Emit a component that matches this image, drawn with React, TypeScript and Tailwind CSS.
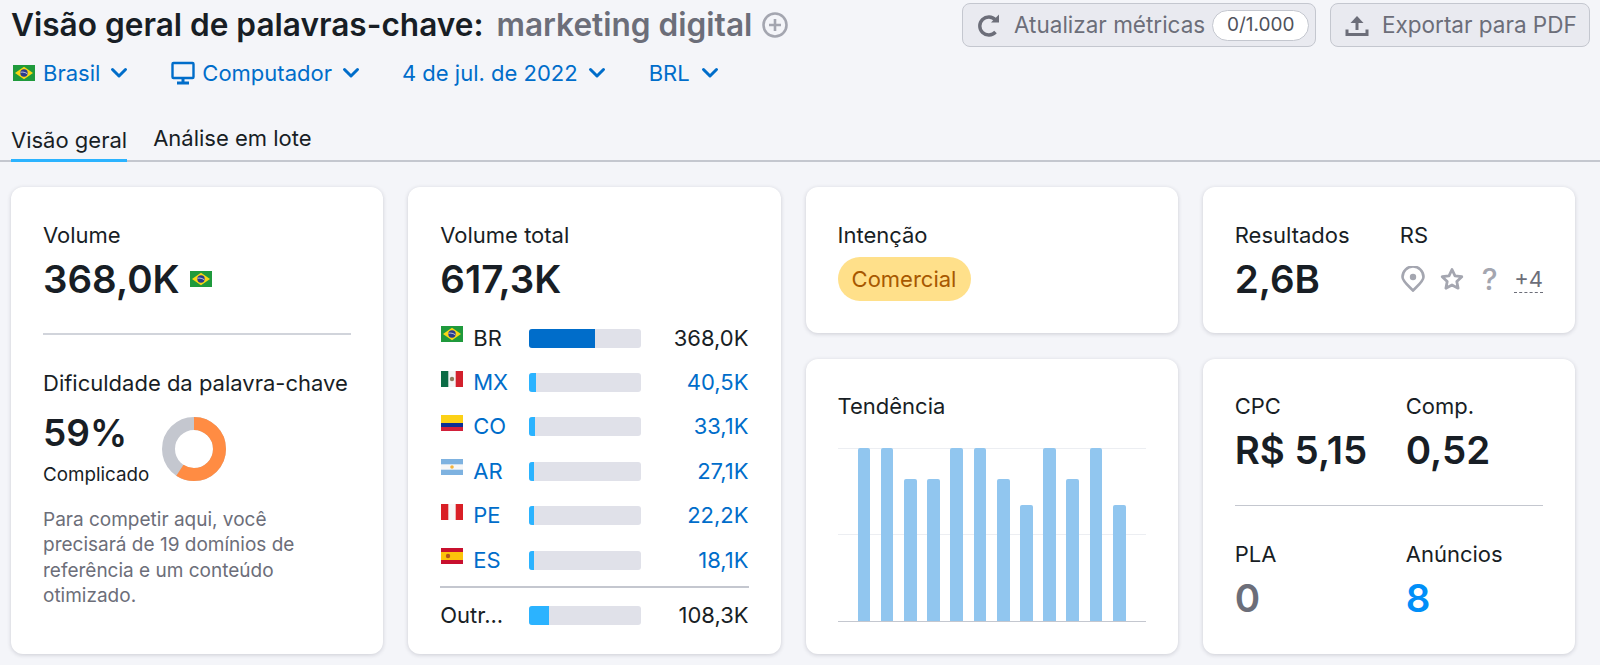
import type { ReactNode } from 'react';

const Chevron = () => (
  <svg width="18" height="12" viewBox="0 0 18 12" className="shrink-0" fill="none">
    <path d="M2.500 2.500 9 9l6.500-6.500" stroke="#006dca" strokeWidth="3" strokeLinecap="round" strokeLinejoin="round" />
  </svg>
);

const FlagBR = () => (
  <svg width="22" height="16" viewBox="0 0 22 16" className="shrink-0">
    <rect width="22" height="16" fill="#1f9a3c" />
    <path d="M11 1.800 20 8l-9 6.200L2 8z" fill="#f9d616" />
    <circle cx="11" cy="8" r="3.700" fill="#2b3a8c" />
    <path d="M7.600 7.200c2.400-.4 4.800.2 6.700 1.600" stroke="#fff" strokeWidth="0.7" fill="none" />
  </svg>
);

const FlagMX = () => (
  <svg width="22" height="16" viewBox="0 0 22 16" className="shrink-0">
    <rect width="22" height="16" fill="#f4f4f4" />
    <rect width="7.300" height="16" fill="#0b6b45" />
    <rect x="14.700" width="7.300" height="16" fill="#d2202c" />
    <circle cx="11" cy="8" r="2.200" fill="#8d7b5c" />
  </svg>
);

const FlagCO = () => (
  <svg width="22" height="16" viewBox="0 0 22 16" className="shrink-0">
    <rect width="22" height="8" fill="#fcd116" />
    <rect y="8" width="22" height="4" fill="#0b2f95" />
    <rect y="12" width="22" height="4" fill="#d2203a" />
  </svg>
);

const FlagAR = () => (
  <svg width="22" height="16" viewBox="0 0 22 16" className="shrink-0">
    <rect width="22" height="16" fill="#7eb2e0" />
    <rect y="5.300" width="22" height="5.400" fill="#f7f7f7" />
    <circle cx="11" cy="8" r="1.800" fill="#f4b43c" />
  </svg>
);

const FlagPE = () => (
  <svg width="22" height="16" viewBox="0 0 22 16" className="shrink-0">
    <rect width="22" height="16" fill="#f7f7f7" />
    <rect width="7.300" height="16" fill="#d91f26" />
    <rect x="14.700" width="7.300" height="16" fill="#d91f26" />
  </svg>
);

const FlagES = () => (
  <svg width="22" height="16" viewBox="0 0 22 16" className="shrink-0">
    <rect width="22" height="16" fill="#c8102e" />
    <rect y="4" width="22" height="8" fill="#fcc30b" />
    <circle cx="7" cy="8" r="2.200" fill="#b5541c" />
  </svg>
);

const Label = ({ children }: { children: ReactNode }) => (
  <div className="text-[22px] leading-[28px] text-[#181e25] whitespace-nowrap">{children}</div>
);

const Big = ({ children, color = 'text-[#181e25]' }: { children: ReactNode; color?: string }) => (
  <div className={`text-[38.5px] leading-[44px] font-semibold whitespace-nowrap ${color}`}>{children}</div>
);

const Card = ({ children, className = '' }: { children: ReactNode; className?: string }) => (
  <div className={`bg-white rounded-xl shadow-[0_1px_4px_rgba(25,30,50,0.18)] px-[32px] ${className}`}>{children}</div>
);

const countries = [
  { flag: <FlagBR />, code: 'BR', pct: 59, value: '368,0K', main: true },
  { flag: <FlagMX />, code: 'MX', pct: 6, value: '40,5K' },
  { flag: <FlagCO />, code: 'CO', pct: 5.5, value: '33,1K' },
  { flag: <FlagAR />, code: 'AR', pct: 4.5, value: '27,1K' },
  { flag: <FlagPE />, code: 'PE', pct: 4.5, value: '22,2K' },
  { flag: <FlagES />, code: 'ES', pct: 4.5, value: '18,1K' },
];

const trend = [173, 173, 142, 142, 173, 173, 142, 116, 173, 142, 173, 116];

export default function App() {
  return (
    <div className="w-[1600px] h-[665px] overflow-hidden bg-[#f4f5f9] text-[#181e25] [font-family:Inter,sans-serif]">
      <div className="flex justify-between pl-[11px] pr-[10px] pt-[3px]">
        <div>
          <div className="flex items-center h-[44px] text-[31.6px] font-semibold whitespace-nowrap">
            <span>Visão geral de palavras-chave:</span>
            <span className="ml-[13px] text-[#6c6e79]">marketing digital</span>
            <svg width="28" height="28" viewBox="0 0 28 28" className="ml-[9px]" fill="none">
              <circle cx="14" cy="14" r="11.500" stroke="#a4a6b0" strokeWidth="2.600" />
              <path d="M14 8v12M8 14h12" stroke="#a4a6b0" strokeWidth="2.600" />
            </svg>
          </div>
          <div className="flex items-center mt-[8px] ml-[2px] h-[36px] text-[22px] text-[#006dca] whitespace-nowrap">
            <FlagBR />
            <span className="ml-[8px]">Brasil</span>
            <span className="ml-[10px]"><Chevron /></span>
            <svg width="24" height="24" viewBox="0 0 24 24" className="ml-[43px]" fill="none">
              <rect x="1.500" y="2" width="21" height="15" rx="1" stroke="#006dca" strokeWidth="2.400" />
              <path d="M12 17v4M6 22h12" stroke="#006dca" strokeWidth="3" />
            </svg>
            <span className="ml-[7px]">Computador</span>
            <span className="ml-[10px]"><Chevron /></span>
            <span className="ml-[42px]">4 de jul. de 2022</span>
            <span className="ml-[10px]"><Chevron /></span>
            <span className="ml-[43px]">BRL</span>
            <span className="ml-[11px]"><Chevron /></span>
          </div>
        </div>
        <div className="flex gap-[14px] text-[22.5px] text-[#6c6e79] whitespace-nowrap">
          <div className="flex items-center w-[354px] h-[44px] rounded-lg border border-[#c4c7cf] bg-[#e9eaf0] pl-[14px]">
            <svg width="24" height="24" viewBox="0 0 24 24" fill="none">
              <path d="M18.500 7A9 9 0 1 0 18.500 19" stroke="#6c6e79" strokeWidth="3.400" />
              <path d="M14 9.500H22V1.500z" fill="#6c6e79" />
            </svg>
            <span className="ml-[13px]">Atualizar métricas</span>
            <span className="flex items-center justify-center ml-[7px] w-[97px] h-[31px] rounded-full border border-[#c4c7cf] bg-white text-[19px] text-[#50525c]">0/1.000</span>
          </div>
          <div className="flex items-center w-[260px] h-[44px] rounded-lg border border-[#c4c7cf] bg-[#e9eaf0] pl-[14px]">
            <svg width="24" height="24" viewBox="0 0 24 24" fill="none">
              <path d="M12 17V7" stroke="#6c6e79" strokeWidth="3" />
              <path d="M5.500 10 12 3l6.500 7z" fill="#6c6e79" />
              <path d="M2 16.500v5h20v-5" stroke="#6c6e79" strokeWidth="3" />
            </svg>
            <span className="ml-[13px]">Exportar para PDF</span>
          </div>
        </div>
      </div>

      <div className="flex items-end gap-[26px] mt-[29px] h-[42px] px-[11px] border-b-2 border-[#c4c7cf] text-[22px] whitespace-nowrap">
        <div className="h-[42px] leading-[40px] border-b-[3px] border-[#2bb3ff] mb-[-2px]">Visão geral</div>
        <div className="h-[42px] leading-[40px]">Análise em lote</div>
      </div>

      <div className="grid grid-cols-4 gap-x-[25px] gap-y-[26px] grid-rows-[146px_295px] mt-[25px] ml-[11px] mr-[25px]">
        <Card className="row-span-2 pt-[34px]">
          <Label>Volume</Label>
          <div className="flex items-center mt-[8px]">
            <Big>368,0K</Big>
            <span className="ml-[10px]"><FlagBR /></span>
          </div>
          <div className="h-[2px] bg-[#d1d4db] mt-[32px]" />
          <div className="mt-[34px]"><Label>Dificuldade da palavra-chave</Label></div>
          <div className="flex mt-[14px]">
            <div>
              <div className="text-[37px] leading-[44px] font-semibold whitespace-nowrap">59%</div>
              <div className="text-[18.8px] leading-[26px] mt-[7px]">Complicado</div>
            </div>
            <svg width="64" height="64" viewBox="0 0 64 64" className="ml-[13px] mt-[6px]">
              <circle cx="32" cy="32" r="25.500" fill="none" stroke="#c4c7cf" strokeWidth="13" />
              <circle cx="32" cy="32" r="25.500" fill="none" stroke="#ff8c43" strokeWidth="13" strokeDasharray="94.500 160.200" transform="rotate(-90 32 32)" />
            </svg>
          </div>
          <p className="mt-[19px] text-[19px] leading-[25.4px] text-[#6c6e79]">
            Para competir aqui, você precisará de 19 domínios de referência e um conteúdo otimizado.
          </p>
        </Card>

        <Card className="row-span-2 pt-[34px]">
          <Label>Volume total</Label>
          <div className="mt-[8px]"><Big>617,3K</Big></div>
          <div className="mt-[15px]">
            {countries.map((c) => (
              <div key={c.code} className="flex items-center h-[44.4px] text-[22px]">
                <span className="mt-[-8px] ml-px">{c.flag}</span>
                <span className={`ml-[10px] w-[56px] ${c.main ? '' : 'text-[#006dca]'}`}>{c.code}</span>
                <div className="w-[112px] h-[19px] rounded-[3px] bg-[#e0e1e9] overflow-hidden">
                  <div className={`h-full ${c.main ? 'bg-[#006dca]' : 'bg-[#2bb3ff]'}`} style={{ width: `${c.pct}%` }} />
                </div>
                <span className={`ml-auto ${c.main ? '' : 'text-[#006dca]'}`}>{c.value}</span>
              </div>
            ))}
          </div>
          <div className="h-[2px] bg-[#c4c7cf] mt-[4px]" />
          <div className="flex items-center h-[54px] text-[22px]">
            <span className="w-[89px]">Outr...</span>
            <div className="w-[112px] h-[19px] rounded-[3px] bg-[#e0e1e9] overflow-hidden">
              <div className="h-full w-[18%] bg-[#2bb3ff]" />
            </div>
            <span className="ml-auto">108,3K</span>
          </div>
        </Card>

        <Card className="pt-[34px]">
          <Label>Intenção</Label>
          <div className="flex items-center justify-center mt-[8px] w-[133px] h-[44px] rounded-full bg-[#ffe08a] text-[22px] text-[#a75800]">Comercial</div>
        </Card>

        <Card className="pt-[34px]">
          <div className="flex">
            <div className="w-[165px]">
              <Label>Resultados</Label>
              <div className="mt-[8px]"><Big>2,6B</Big></div>
            </div>
            <div className="flex-1">
              <Label>RS</Label>
              <div className="flex items-center justify-between mt-[8px] h-[44px]">
                <svg width="24" height="26" viewBox="0 0 24 26" className="ml-px" fill="none">
                  <path d="M12 24.500C6 18.500 1.500 15 1.500 11a10.500 10.500 0 0 1 21 0C22.500 15 18 18.500 12 24.500z" stroke="#a4a6b0" strokeWidth="2.600" />
                  <circle cx="12" cy="11" r="3.200" fill="#a4a6b0" />
                </svg>
                <svg width="26" height="26" viewBox="0 0 26 26" fill="none">
                  <path d="M13 3.500l3 6.300 6.800.9-5 4.700 1.300 6.800L13 19l-6.100 3.200 1.300-6.800-5-4.700 6.800-.9z" stroke="#a4a6b0" strokeWidth="2.800" strokeLinejoin="round" />
                </svg>
                <span className="w-[20px] text-center text-[30px] font-medium text-[#a4a6b0]">?</span>
                <span className="text-[22px] leading-[26px] text-[#6c6e79] border-b border-dashed border-[#6c6e79]">+4</span>
              </div>
            </div>
          </div>
        </Card>

        <Card className="pt-[33px]">
          <Label>Tendência</Label>
          <div className="relative mt-[28px] h-[174px] flex items-end justify-between px-[20px] border-b border-[#c4c7cf]">
            <div className="absolute left-0 right-0 top-0 h-px bg-[#eceef2]" />
            <div className="absolute left-0 right-0 top-[86px] h-px bg-[#eceef2]" />
            {trend.map((h, i) => (
              <div key={i} className="relative w-[12.7px] rounded-t-[2px] bg-[#91c6ef]" style={{ height: h }} />
            ))}
          </div>
        </Card>

        <Card className="pt-[33px]">
          <div className="grid grid-cols-[171px_1fr]">
            <div>
              <Label>CPC</Label>
              <div className="mt-[8px]"><Big>R$ 5,15</Big></div>
            </div>
            <div>
              <Label>Comp.</Label>
              <div className="mt-[8px]"><Big>0,52</Big></div>
            </div>
          </div>
          <div className="h-px bg-[#c4c7cf] mt-[33px]" />
          <div className="grid grid-cols-[171px_1fr] mt-[34px]">
            <div>
              <Label>PLA</Label>
              <div className="mt-[8px]"><Big color="text-[#6c6e79]">0</Big></div>
            </div>
            <div>
              <Label>Anúncios</Label>
              <div className="mt-[8px]"><Big color="text-[#008ff8]">8</Big></div>
            </div>
          </div>
        </Card>
      </div>
    </div>
  );
}
